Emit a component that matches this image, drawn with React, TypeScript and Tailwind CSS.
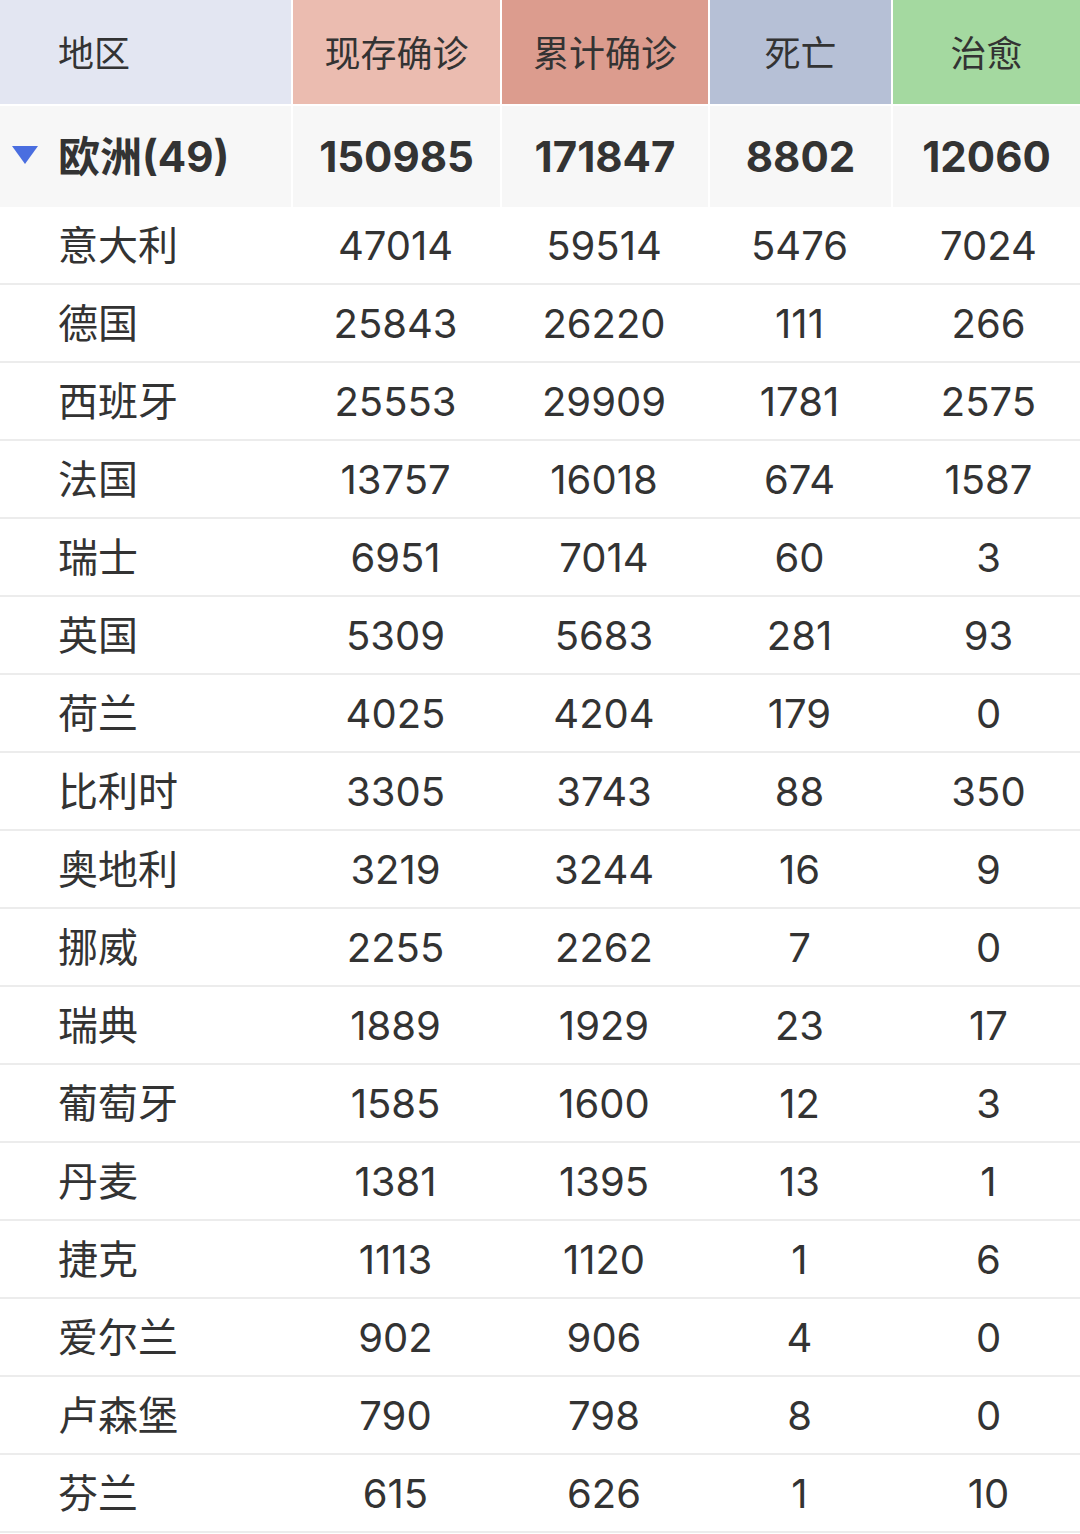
const rows: [string, number, number, number, number][] = [
  ["意大利", 47014, 59514, 5476, 7024],
  ["德国", 25843, 26220, 111, 266],
  ["西班牙", 25553, 29909, 1781, 2575],
  ["法国", 13757, 16018, 674, 1587],
  ["瑞士", 6951, 7014, 60, 3],
  ["英国", 5309, 5683, 281, 93],
  ["荷兰", 4025, 4204, 179, 0],
  ["比利时", 3305, 3743, 88, 350],
  ["奥地利", 3219, 3244, 16, 9],
  ["挪威", 2255, 2262, 7, 0],
  ["瑞典", 1889, 1929, 23, 17],
  ["葡萄牙", 1585, 1600, 12, 3],
  ["丹麦", 1381, 1395, 13, 1],
  ["捷克", 1113, 1120, 1, 6],
  ["爱尔兰", 902, 906, 4, 0],
  ["卢森堡", 790, 798, 8, 0],
  ["芬兰", 615, 626, 1, 10],
];

// header/summary rows use 2px white gaps between cells
const gapGrid = "grid grid-cols-[291px_207px_206px_181px_187px] gap-x-[2px]";
const grid = "grid grid-cols-[291px_209px_208px_183px_189px]";
const font = "font-['Inter','Noto_Sans_CJK_SC',sans-serif]";
const head = "flex items-center justify-center pt-[4px]";

export default function App() {
  return (
    <div className={`w-[1080px] bg-white text-[#333] ${font}`}>
      <div className={`${gapGrid} h-[104px] text-[36px]`}>
        <div className="flex items-center bg-[#e3e6f2] pl-[58px] pt-[4px]">地区</div>
        <div className={`${head} bg-[#ebbcb0]`}>现存确诊</div>
        <div className={`${head} bg-[#dc9c8e]`}>累计确诊</div>
        <div className={`${head} bg-[#b6c0d6]`}>死亡</div>
        <div className={`${head} bg-[#a4d9a0]`}>治愈</div>
      </div>
      <div className={`${gapGrid} mt-[2px] h-[101px] text-[42px] font-bold`}>
        <div className="relative flex items-center bg-[#f7f7f7] pl-[58px]">
          <svg className="absolute left-[12px] top-[40px]" width="26" height="18" viewBox="0 0 26 18">
            <polygon points="0,0 26,0 13,18" fill="#4a6ee0" />
          </svg>
          欧洲(49)
        </div>
        <div className="flex items-center justify-center bg-[#f7f7f7]">150985</div>
        <div className="flex items-center justify-center bg-[#f7f7f7]">171847</div>
        <div className="flex items-center justify-center bg-[#f7f7f7]">8802</div>
        <div className="flex items-center justify-center bg-[#f7f7f7]">12060</div>
      </div>
      {rows.map(([name, a, b, c, d]) => (
        <div key={name} className={`${grid} h-[78px] border-b-2 border-[#ececec] pt-[2px] text-[40px]`}>
          <div className="flex items-center pl-[58px]">{name}</div>
          <div className="flex items-center justify-center">{a}</div>
          <div className="flex items-center justify-center">{b}</div>
          <div className="flex items-center justify-center">{c}</div>
          <div className="flex items-center justify-center pl-[6px]">{d}</div>
        </div>
      ))}
    </div>
  );
}
